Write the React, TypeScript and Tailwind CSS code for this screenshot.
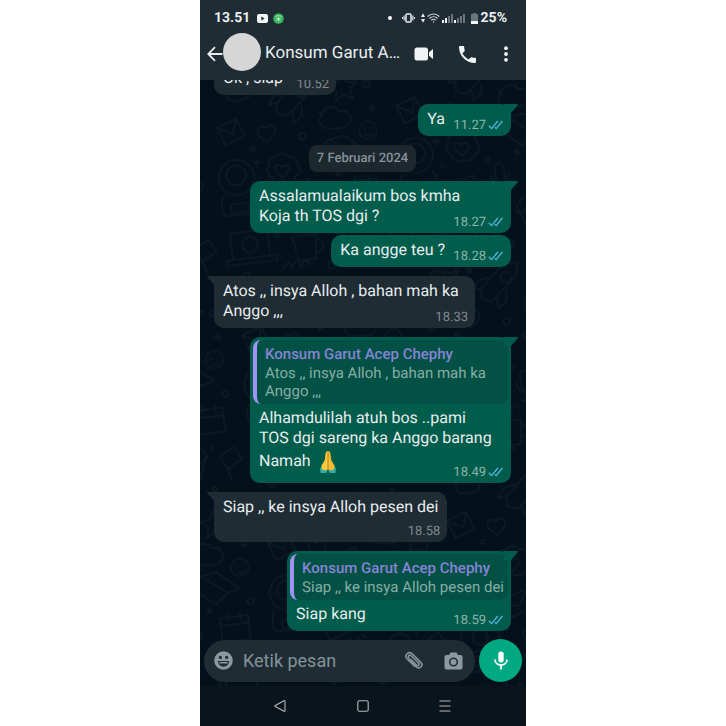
import { useId, useState } from 'react'
import type { ReactNode } from 'react'

interface Message {
  id: number
  sent: boolean
  text: ReactNode
  time: string
  tail?: boolean
  wide?: boolean
  timeBelow?: boolean
  quote?: { author: string; text: string }
}

const AUTHOR = 'Konsum Garut Acep Chephy'

const BEFORE: Message[] = [
  { id: 1, sent: false, text: 'Ok , siap', time: '10.52', tail: true },
  { id: 2, sent: true, text: 'Ya', time: '11.27', tail: true },
]

const AFTER: Message[] = [
  { id: 3, sent: true, text: 'Assalamualaikum bos kmha\nKoja th TOS dgi ?', time: '18.27', tail: true, wide: true },
  { id: 4, sent: true, text: 'Ka angge teu ?', time: '18.28' },
  { id: 5, sent: false, text: 'Atos ,, insya Alloh , bahan mah ka Anggo ,,,', time: '18.33', tail: true },
  {
    id: 6,
    sent: true,
    text: <>{'Alhamdulilah atuh bos ..pami\nTOS dgi sareng ka Anggo barang\nNamah '}<PrayingHands /></>,
    time: '18.49',
    tail: true,
    quote: { author: AUTHOR, text: 'Atos ,, insya Alloh , bahan mah ka Anggo ,,,' },
  },
  { id: 7, sent: false, text: 'Siap ,, ke insya Alloh pesen dei', time: '18.58', tail: true, timeBelow: true },
  {
    id: 8,
    sent: true,
    text: 'Siap kang',
    time: '18.59',
    tail: true,
    quote: { author: AUTHOR, text: 'Siap ,, ke insya Alloh pesen dei' },
  },
]

function PrayingHands() {
  return (
    <svg viewBox="0 0 18 24" className="my-[2px] ml-1 inline-block h-6 w-[18px] align-middle" role="img" aria-label="🙏">
      <path d="M1 18.500 4 16.500l4.500 3.500-1 3H1.500z" fill="#35a9a4" />
      <path d="M17 18.500 14 16.500 9.500 20l1 3h6z" fill="#35a9a4" />
      <path d="M8.900 1.200c-1.500-.4-2.300.9-2.400 3L5.800 10 2.600 15.500c-.7 1.600-.2 3.200 1.200 4.200 1.600 1 3.600.9 5.100-.5z" fill="#fbcb3c" />
      <path d="M9.100 1.200c1.500-.4 2.300.9 2.400 3l.7 5.800 3.200 5.500c.7 1.600.2 3.200-1.200 4.200-1.600 1-3.600.9-5.100-.5z" fill="#f8bb30" />
      <path d="M9 2.500v16" stroke="#dd8519" strokeWidth="1" />
    </svg>
  )
}

function Ticks() {
  return (
    <svg viewBox="0 0 16 12" className="h-3 w-4" fill="none" stroke="#4fb6e0" strokeWidth="1.300" aria-hidden="true">
      <path d="M.8 5.800 3.600 8.600 9.800 1M6.800 7.200 8.200 8.600 14.400 1" />
    </svg>
  )
}

function Tail({ sent }: { sent: boolean }) {
  return sent ? (
    <svg viewBox="0 0 14 9" className="absolute -right-[7px] top-0 h-[9px] w-[14px]" fill="#005c4b" aria-hidden="true">
      <path d="M0 0h13c1 0 1.300.9.600 1.600L7 9H0z" />
    </svg>
  ) : (
    <svg viewBox="0 0 14 9" className="absolute -left-[7px] top-0 h-[9px] w-[14px]" fill="#1f2c34" aria-hidden="true">
      <path d="M14 0H1C0 0-.3.9.4 1.600L7 9h7z" />
    </svg>
  )
}

function Bubble({ message }: { message: Message }) {
  const { sent, text, time, tail, wide, timeBelow, quote } = message
  return (
    <div
      className={`relative max-w-[261px] rounded-[10px] ${wide ? 'w-full' : 'w-fit'} ${tail ? 'mt-[9px]' : 'mt-[2px]'} ${
        sent ? 'self-end bg-[#005c4b]' : 'self-start bg-[#1f2c34]'
      }`}
    >
      {tail && <Tail sent={sent} />}
      {quote && (
        <div className="px-[3px] pt-[3px]">
          <div className="overflow-hidden rounded-lg border-l-4 border-[#a091f5] bg-[#025144] py-1 pl-2 pr-1">
            <p className="text-[15px] leading-[20px] font-medium text-[#8783d6]">{quote.author}</p>
            <p className="text-[15px] leading-[18px] text-[#86ada4]">{quote.text}</p>
          </div>
        </div>
      )}
      <div className={`px-[9px] pb-[7px] text-[16px] leading-[20px] whitespace-pre-line text-[#e9edef] ${quote ? 'pt-1' : 'pt-[5px]'}`}>
        {text}
        {timeBelow ? <span className="block h-[18px]" /> : <span className={`inline-block h-1 ${sent ? 'w-[57px]' : 'w-11'}`} />}
      </div>
      <span
        className={`absolute bottom-[3px] right-[7px] flex items-center gap-[2px] text-[13px] leading-[15px] ${
          sent ? 'text-[#8fb5ac]' : 'text-[#81898e]'
        }`}
      >
        {time}
        {sent && <Ticks />}
      </span>
    </div>
  )
}

// Faint doodle wallpaper behind the conversation
function Wallpaper() {
  const id = useId()
  return (
    <svg className="absolute inset-0 h-full w-full" aria-hidden="true">
      <defs>
        <pattern id={id} width="164" height="190" patternUnits="userSpaceOnUse" patternTransform="rotate(-7) scale(1.1)">
          <g fill="none" stroke="#0d1d25" strokeWidth="1.200" strokeLinecap="round" strokeLinejoin="round">
            <path d="M22 14c0-6 9-8 12-2 5-3 11 1 9 7-2 5-17 5-20 1-1-2-2-4-1-6z" />
            <path d="M66 30l18-16c6-5 15-5 18-4 0 6-3 13-9 17L75 42l-9-3zM75 20l-10 2-6 8 9-1M89 35l-1 9-8 5v-9" />
            <circle cx="90" cy="22" r="5" />
            <path d="M128 10l4 8 9 1-7 6 2 9-8-5-8 5 2-9-7-6 9-1z" />
            <path d="M10 45l18-6 6 16-18 7zM10 45l14 8 4-14" />
            <path d="M48 58c-6-6 2-13 6-7 4-6 12 1 6 7l-6 6z" />
            <path d="M112 58c-8 0-12-8-6-13 2-8 14-8 16-1 8-2 13 7 8 12-3 4-12 3-18 2z" />
            <circle cx="22" cy="92" r="16" />
            <circle cx="22" cy="90" r="9" />
            <path d="M8 108c-4 8-3 14 0 18h28c4-5 3-13 0-18M14 116h16v8H14z" />
            <path d="M60 78c4-4 9-3 11 1 5-1 9 3 7 8 4 3 3 9-2 10-1 5-7 7-11 4-4 3-10 0-10-5-5-2-6-8-2-11-2-5 3-8 7-7z" />
            <path d="M58 90c-2-4 4-7 7-2 4-4 8 1 5 4l-6 6z" />
            <path d="M98 76l12-8 22 18-12 9zM110 68l14-2 19 17-11 3" />
            <circle cx="146" cy="64" r="8" />
            <path d="M143 67c2 3 5 3 7 0M143 62v1M149 62v1" />
            <path d="M50 122l22-6 5 17-22 7zM57 128l9 2 5-9" />
            <path d="M92 112c0-5 8-5 8 0v10c0 5-8 5-8 0zM88 118c0 13 16 13 16 0M96 128v7M91 135h10" />
            <path d="M122 108h26v22h-26zM122 115h26M129 104v7M141 104v7" />
            <path d="M10 142h34v24H10zM4 171h46M4 166h46v5H4z" />
            <circle cx="27" cy="154" r="7" />
            <path d="M66 152h22l-3 22H69zM88 157c8 0 7 11-2 11M72 147c-2-4 3-4 1-8M80 147c-2-4 3-4 1-8" />
            <path d="M108 150c3-11 18-11 20 0l-10 25zM106 152c3 5 8 4 10 0 3 5 9 4 13-1" />
            <path d="M140 152l14-7 6 12-14 7zM146 164l3 12" />
            <path d="M54 180c4-7 8-7 8 0 4-7 8-7 8 0 4-7 8-7 8 0" />
            <path d="M46 8v7M43 11h7M104 42l3 5M152 40v7M148 44h7M42 78v7M39 81h7M112 98l4 4M116 98l-4 4M44 104l4 3M84 138l4 3M134 140v5" />
            <circle cx="58" cy="12" r="2" />
            <circle cx="150" cy="22" r="3" />
            <circle cx="40" cy="68" r="2" />
            <circle cx="86" cy="62" r="3" />
            <circle cx="86" cy="104" r="2" />
            <circle cx="152" cy="96" r="3" />
            <circle cx="52" cy="148" r="2" />
            <circle cx="98" cy="182" r="3" />
            <circle cx="20" cy="182" r="3" />
            <circle cx="132" cy="181" r="2" />
          </g>
        </pattern>
      </defs>
      <rect width="100%" height="100%" fill={`url(#${id})`} />
    </svg>
  )
}

function StatusBar() {
  return (
    <div className="flex h-8 items-center justify-between pt-1 pl-[14px] pr-[19px] text-[14px] font-bold">
      <div className="flex items-center gap-[5px]">
        <span className="mr-[2px]">13.51</span>
        <svg viewBox="0 0 11 9" className="h-[9px] w-[11px]" aria-hidden="true">
          <rect width="11" height="9" rx="2" fill="#f1f5f6" />
          <path d="M4.300 2.500v4l3.300-2z" fill="#1f2c34" />
        </svg>
        <svg viewBox="0 0 11 11" className="h-[11px] w-[11px]" aria-hidden="true">
          <circle cx="5.500" cy="5.500" r="5.300" fill="#35b558" />
          <path d="M2.500 3.500c2-1 4-1 6 0M3.300 5.500h4.400M5.500 4v4.500M3.500 7.500l2-1.500 2 1.500" stroke="#c9f0d2" strokeWidth=".8" fill="none" />
        </svg>
      </div>
      <div className="flex items-center gap-[2px]">
        <span className="mr-2 h-1 w-1 rounded-full bg-white" />
        <svg viewBox="0 0 13 10" className="mr-1 h-[10px] w-[13px]" fill="none" stroke="#e9edef" aria-hidden="true">
          <rect x="4" y="1" width="5" height="8" rx="1" strokeWidth="1.500" />
          <path d="M2.200 2.500v5M10.800 2.500v5M.6 4v2M12.400 4v2" strokeWidth="1.100" />
        </svg>
        <svg viewBox="0 0 4 10" className="h-[10px] w-1" fill="#e9edef" aria-hidden="true">
          <path d="M2 .3 4 4H0zM2 9.700 4 6H0z" />
        </svg>
        <svg viewBox="0 0 13 10" className="h-[10px] w-[13px]" fill="none" stroke="#d5dadd" strokeWidth="1.100" aria-hidden="true">
          <path d="M.7 3.500c3.300-3.300 8.300-3.300 11.600 0M2.500 5.500c2.300-2.300 5.700-2.300 8 0M4.300 7.300c1.300-1.200 3.100-1.200 4.400 0" />
          <circle cx="6.500" cy="9" r=".7" fill="#d5dadd" stroke="none" />
        </svg>
        <svg viewBox="0 0 23 10" className="h-[10px] w-[23px]" aria-hidden="true">
          <path d="M0 7h2v3H0zM3 5h2v5H3zM12 7h2v3h-2z" fill="#f1f5f6" />
          <path d="M6 3h2v7H6zM9 1h2v9H9zM15 5h2v5h-2zM18 3h2v7h-2zM21 1h2v9h-2z" fill="#6b767c" />
        </svg>
        <svg viewBox="0 0 7 11" className="ml-1 h-[11px] w-[7px]" aria-hidden="true">
          <path d="M2 0h3v1h2v7H0V1h2z" fill="#6b767c" />
          <path d="M0 8h7v3H0z" fill="#f1f5f6" />
        </svg>
        <span className="ml-px">25%</span>
      </div>
    </div>
  )
}

function Header() {
  return (
    <header className="relative z-10 shrink-0 bg-[#1f2c34] text-[#e9edef]">
      <StatusBar />
      <div className="flex h-12 items-center pb-1 pl-[7px] pr-[15px]">
        <button type="button" aria-label="Kembali" className="shrink-0">
          <svg viewBox="0 0 16 16" className="h-4 w-4" fill="none" stroke="#e9edef" strokeWidth="1.800" aria-hidden="true">
            <path d="M15.500 8H1.500M8 1.200 1.300 8 8 14.800" />
          </svg>
        </button>
        <div className="-mt-1 h-[38px] w-[38px] shrink-0 rounded-full bg-[#d6d6d6]" />
        <h1 className="ml-1 min-w-0 flex-1 truncate text-[17px]">{AUTHOR}</h1>
        <div className="ml-3 flex shrink-0 items-center">
          <button type="button" aria-label="Panggilan video">
            <svg viewBox="0 0 20 14" className="h-[14px] w-5" fill="#f1f5f6" aria-hidden="true">
              <rect x=".5" y=".5" width="13.500" height="13" rx="2.500" />
              <path d="M15 5.200 19 2v10l-4-3.200z" />
            </svg>
          </button>
          <button type="button" aria-label="Panggilan suara" className="ml-[25px]">
            <svg viewBox="3 3 18 18" className="h-[17px] w-[17px]" fill="#f1f5f6" aria-hidden="true">
              <path d="M6.620 10.790c1.440 2.830 3.760 5.140 6.590 6.590l2.200-2.200c.27-.27.67-.36 1.020-.24 1.120.37 2.330.57 3.570.57.55 0 1 .45 1 1V20c0 .55-.45 1-1 1-9.390 0-17-7.610-17-17 0-.55.45-1 1-1h3.500c.55 0 1 .45 1 1 0 1.250.2 2.450.57 3.570.11.35.03.74-.25 1.020z" />
            </svg>
          </button>
          <button type="button" aria-label="Opsi lainnya" className="ml-[25px]">
            <svg viewBox="0 0 10 16" className="h-4 w-[10px]" fill="#f1f5f6" aria-hidden="true">
              <circle cx="5" cy="2.200" r="1.900" />
              <circle cx="5" cy="8" r="1.900" />
              <circle cx="5" cy="13.800" r="1.900" />
            </svg>
          </button>
        </div>
      </div>
    </header>
  )
}

function Composer() {
  const [draft, setDraft] = useState('')
  return (
    <form onSubmit={e => e.preventDefault()} className="relative flex shrink-0 items-center gap-1 px-1 pt-2 pb-1">
      <div className="flex h-[42px] min-w-0 flex-1 items-center rounded-full bg-[#1f2c34] pl-[10px] pr-3">
        <button type="button" aria-label="Emoji" className="shrink-0">
          <svg viewBox="0 0 20 20" className="h-[19px] w-[19px]" aria-hidden="true">
            <circle cx="10" cy="10" r="9.800" fill="#8c999f" />
            <circle cx="6.700" cy="6.800" r="1.700" fill="#1f2c34" />
            <circle cx="13.300" cy="6.800" r="1.700" fill="#1f2c34" />
            <path d="M4 10.500h12c-.4 3.700-2.700 6-6 6s-5.600-2.300-6-6z" fill="#1f2c34" />
            <path d="M5.700 11.600h8.600v1.500H5.700z" fill="#8c999f" />
          </svg>
        </button>
        <input
          type="text"
          aria-label="Ketik pesan"
          placeholder="Ketik pesan"
          value={draft}
          onChange={e => setDraft(e.target.value)}
          className="ml-[10px] min-w-0 flex-1 bg-transparent text-[18px] text-[#e9edef] outline-none placeholder:text-[#84929a]"
        />
        <button type="button" aria-label="Lampirkan" className="shrink-0">
          <svg viewBox="0 0 20 20" className="h-5 w-5" fill="none" stroke="#84929a" strokeWidth="1.600" strokeLinecap="round" aria-hidden="true">
            <path d="M4.800 8.200l7.700 7.700c3 2.700 7.300-1.300 4.500-4.300L8 2.700C4.600-.3-.2 4.200 3 7.700l7.800 7.700M14.500 12 7.200 4.800C5 3.200 3.300 5.200 4.900 7" />
            <path d="M14.500 12c1.500 1.700-.5 3.400-2 2L6.800 8.300" />
          </svg>
        </button>
        <button type="button" aria-label="Kamera" className="ml-5 shrink-0">
          <svg viewBox="0 0 19 18" className="h-[18px] w-[19px]" aria-hidden="true">
            <path d="M6.500.5h6L14 3h2.500c1.200 0 2 .8 2 2v10.500c0 1.200-.8 2-2 2h-14c-1.200 0-2-.8-2-2V5c0-1.200.8-2 2-2H5z" fill="#8c999f" />
            <circle cx="9.500" cy="10" r="3.800" fill="none" stroke="#1f2c34" strokeWidth="1.500" />
          </svg>
        </button>
      </div>
      <button
        type="button"
        aria-label="Pesan suara"
        className="flex h-[43px] w-[43px] shrink-0 items-center justify-center rounded-full bg-[#00a884]"
      >
        <svg viewBox="0 0 14 19" className="h-[19px] w-[14px]" fill="none" aria-hidden="true">
          <rect x="4.300" y=".5" width="5.400" height="11" rx="2.700" fill="#fff" />
          <path d="M1 8.500c0 7.300 12 7.300 12 0M7 14v4.500" stroke="#fff" strokeWidth="1.800" />
        </svg>
      </button>
    </form>
  )
}

function NavBar() {
  return (
    <nav className="flex h-10 shrink-0 items-center justify-between bg-[#0b141b] pl-[74px] pr-[75px]">
      <button type="button" aria-label="Kembali">
        <svg viewBox="0 0 12 12" className="h-3 w-3" fill="none" stroke="#b4babe" strokeWidth="1.100" strokeLinejoin="round" aria-hidden="true">
          <path d="M10 .8c.6-.3 1 0 1 .6v9.200c0 .6-.4.9-1 .6L1.300 6.600c-.6-.4-.6-.8 0-1.200z" />
        </svg>
      </button>
      <button type="button" aria-label="Beranda">
        <svg viewBox="0 0 12 12" className="h-3 w-3" fill="none" stroke="#b4babe" strokeWidth="1.100" aria-hidden="true">
          <rect x=".8" y=".8" width="10.400" height="10.400" rx="1.500" />
        </svg>
      </button>
      <button type="button" aria-label="Aplikasi terbaru">
        <svg viewBox="0 0 12 12" className="h-3 w-3" stroke="#b4babe" strokeWidth="1.100" aria-hidden="true">
          <path d="M.5 1h11M.5 6h11M.5 11h11" />
        </svg>
      </button>
    </nav>
  )
}

export default function App() {
  return (
    <div className="h-screen bg-white font-[Roboto,sans-serif] [text-rendering:geometricPrecision]">
      <div className="mx-auto flex h-full w-full max-w-[326px] flex-col overflow-hidden bg-[#04111a]">
        <Header />
        <div className="relative flex min-h-0 flex-1 flex-col">
          <Wallpaper />
          <main className="relative flex min-h-0 flex-1 flex-col justify-end overflow-hidden pl-[14px] pr-[15px]">
            {BEFORE.map(m => (
              <Bubble key={m.id} message={m} />
            ))}
            <p className="mt-[9px] self-center rounded-lg bg-[#1c272e] px-2 py-1 text-[13px] leading-[19px] font-medium text-[#84929a]">
              7 Februari 2024
            </p>
            {AFTER.map(m => (
              <Bubble key={m.id} message={m} />
            ))}
          </main>
          <Composer />
        </div>
        <NavBar />
      </div>
    </div>
  )
}
